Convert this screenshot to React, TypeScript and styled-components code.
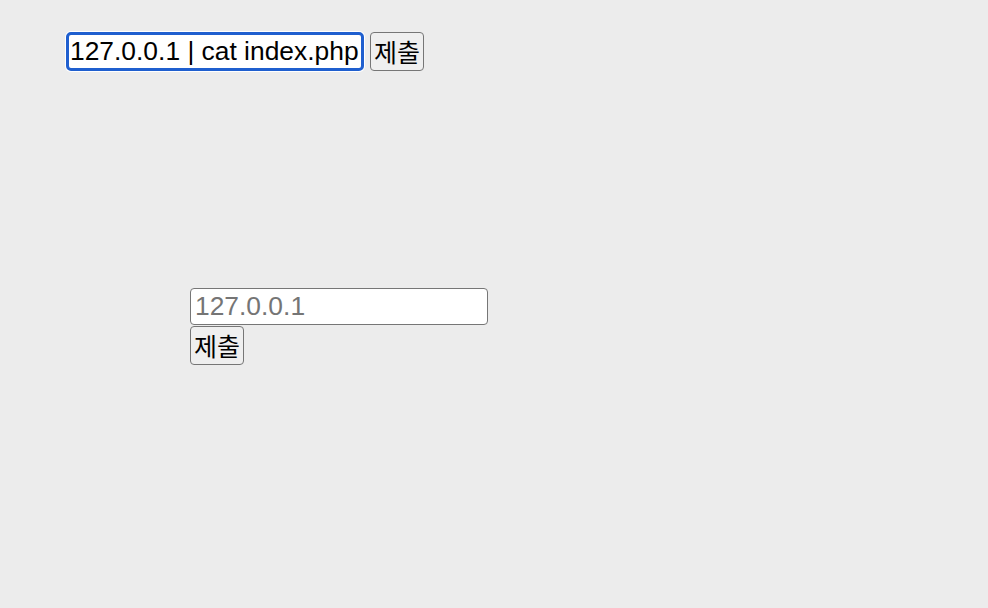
import styled, { createGlobalStyle } from "styled-components";

const GlobalStyle = createGlobalStyle`
  html, body {
    margin: 0;
    background: #ececec;
    font-family: "Liberation Sans", Arial, "Noto Sans CJK KR", sans-serif;
  }
`;

const Page = styled.div`
  width: 988px;
  height: 608px;
  box-sizing: border-box;
  padding: 32px 0 0 66px;
`;

const TopForm = styled.form`
  display: flex;
  align-items: center;
  gap: 6px;
  margin: 0;
`;

const StackForm = styled.form`
  display: flex;
  flex-direction: column;
  align-items: flex-start;
  gap: 1px;
  margin: 217px 0 0 124px;
`;

const Field = styled.input<{ $focused?: boolean }>`
  box-sizing: border-box;
  width: 298px;
  height: ${(p) => (p.$focused ? "39px" : "37px")};
  padding: ${(p) => (p.$focused ? "0 0 0 1px" : "0 0 0 4px")};
  font-family: "Liberation Sans", Arial, sans-serif;
  font-size: 26.4px;
  color: #000;
  background: #fff;
  border: ${(p) => (p.$focused ? "3px solid #1f5fcf" : "1px solid #767676")};
  border-radius: ${(p) => (p.$focused ? "5px" : "4px")};
  outline: none;
  box-shadow: ${(p) => (p.$focused ? "0 0 0 1px #fff" : "none")};

  &::placeholder {
    color: #757575;
  }
`;

const Submit = styled.button`
  box-sizing: border-box;
  height: 39px;
  padding: 0 3px;
  font-family: "Noto Sans CJK KR", "Liberation Sans", sans-serif;
  font-size: 25px;
  line-height: 1;
  color: #000;
  background: #efefef;
  border: 1.5px solid #767676;
  border-radius: 4px;
`;

export default function App() {
  return (
    <>
      <GlobalStyle />
      <Page>
        <TopForm onSubmit={(e) => e.preventDefault()}>
          <Field $focused defaultValue="127.0.0.1 | cat index.php" />
          <Submit type="submit">제출</Submit>
        </TopForm>
        <StackForm onSubmit={(e) => e.preventDefault()}>
          <Field placeholder="127.0.0.1" />
          <Submit type="submit">제출</Submit>
        </StackForm>
      </Page>
    </>
  );
}
